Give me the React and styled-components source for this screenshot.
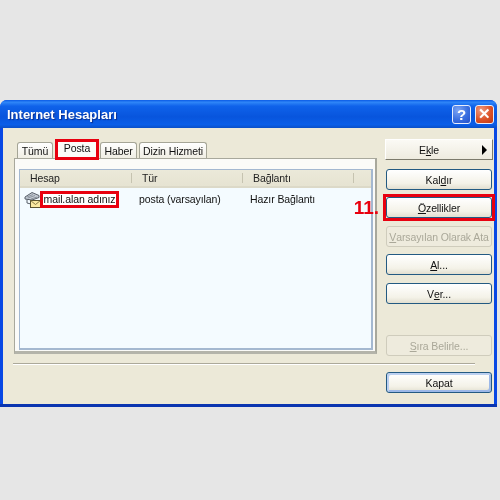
import React from "react";
import styled, { createGlobalStyle } from "styled-components";

const Global = createGlobalStyle`
  html, body { margin: 0; padding: 0; background: #e6e6e6; }
  body { width: 500px; height: 500px; overflow: hidden; font-family: "Liberation Sans", sans-serif; letter-spacing: -0.1px; }
`;

const Page = styled.div`
  width: 500px;
  height: 500px;
  padding-top: 100px;
  box-sizing: border-box;
  background: #e6e6e6;
`;

const Win = styled.div`
  width: 497px;
  height: 307px;
  box-sizing: border-box;
  display: flex;
  flex-direction: column;
  border-radius: 7px 7px 0 0;
  background: #0848e4;
  border-bottom: 3px solid #0a35b0;
  padding: 0 3px 0;
  overflow: hidden;
  filter: blur(0.4px);
`;

const TitleBar = styled.div`
  height: 28px;
  flex: none;
  margin: 0 -3px;
  padding: 0 3px 0 7px;
  display: flex;
  align-items: center;
  justify-content: space-between;
  background: linear-gradient(180deg, #0a5ae6 0%, #2f86f8 8%, #0f62ea 22%, #0855dd 60%, #0a5ee8 88%, #0a4fc8 100%);
`;

const Title = styled.span`
  color: #fff;
  font: bold 13px "Liberation Sans", sans-serif;
  letter-spacing: 0;
  text-shadow: 1px 1px 1px #0a2f90;
`;

const Caption = styled.div`
  display: flex;
  gap: 4px;
`;

const CaptionBtn = styled.div`
  width: 19px;
  height: 19px;
  box-sizing: border-box;
  border: 1px solid #e8eefc;
  border-radius: 3px;
  display: flex;
  align-items: center;
  justify-content: center;
  color: #fff;
  font: bold 15px "Liberation Sans", sans-serif;
  background: ${(p) =>
    p.$close
      ? "radial-gradient(circle at 30% 25%, #ef9a80, #dc5228 55%, #c03a12)"
      : "radial-gradient(circle at 30% 25%, #7ea6f4, #3a6fe0 55%, #2450c8)"};
`;

const Body = styled.div`
  flex: 1;
  background: #ece9d8;
  display: flex;
  flex-direction: column;
  padding: 11px 0 0 11px;
`;

const Upper = styled.div`
  display: flex;
  gap: 9px;
  height: 224px;
`;

const Left = styled.div`
  width: 363px;
  padding-top: 2px;
  display: flex;
  flex-direction: column;
`;

const Tabs = styled.div`
  display: flex;
  height: 17px;
  padding-left: 3px;
  gap: 2px;
  align-items: flex-end;
  position: relative;
  z-index: 1;
`;

const Tab = styled.div`
  height: ${(p) => (p.$active ? 17 : 16)}px;
  width: ${(p) => p.$w}px;
  box-sizing: border-box;
  border: ${(p) => (p.$active ? "none" : "1px solid #a5a596")};
  border-bottom: none;
  border-radius: ${(p) => (p.$active ? "0" : "3px 3px 0 0")};
  background: ${(p) => (p.$active ? "#fbfbf8" : "linear-gradient(180deg,#fff,#f0eee4)")};
  display: flex;
  align-items: center;
  justify-content: center;
  padding-bottom: ${(p) => (p.$active ? 3 : 0)}px;
  font-size: 10.5px;
  color: #111;
  white-space: nowrap;
  outline: ${(p) => (p.$active ? "3px solid #e8000f" : "none")};
  outline-offset: -1px;
  margin: ${(p) => (p.$active ? "0 1px 0 2px" : "0")};
  position: relative;
  z-index: ${(p) => (p.$active ? 2 : 0)};
`;

const Panel = styled.div`
  height: 196px;
  box-sizing: border-box;
  border: 1px solid #a8a89c;
  border-right: 2px solid #a8a89c;
  border-bottom: 3px solid #b4b4aa;
  background: #fbfbf8;
  padding: 10px 2px 0 4px;
`;

const List = styled.div`
  height: 181px;
  box-sizing: border-box;
  border: 1px solid #a4b8d0;
  border-right-width: 2px;
  border-bottom-width: 2px;
  background: #f4fbff;
  display: flex;
  flex-direction: column;
`;

const Head = styled.div`
  height: 18px;
  box-sizing: border-box;
  flex: none;
  display: grid;
  grid-template-columns: 112px 111px 111px 1fr;
  background: linear-gradient(180deg, #ebe9d9, #e6e3d2);
  border-bottom: 2px solid #dcd9c8;
  font-size: 10.5px;
  color: #222;
`;

const HeadCell = styled.div`
  display: flex;
  align-items: center;
  padding-left: 10px;
  position: relative;
  &::after {
    content: "";
    position: absolute;
    right: 0;
    top: 3px;
    bottom: 3px;
    width: 1px;
    background: #c6c3b0;
  }
`;

const Row = styled.div`
  display: grid;
  grid-template-columns: 112px 111px 1fr;
  height: 18px;
  margin-top: 2px;
  align-items: center;
  font-size: 10.5px;
  color: #111;
`;

const NameCell = styled.div`
  display: flex;
  align-items: center;
  padding-left: 4px;
`;

const Name = styled.span`
  margin-left: 1px;
  height: 13px;
  line-height: 13px;
  width: 75px;
  white-space: nowrap;
  background: #fff;
  outline: 3px solid #e8000f;
  outline-offset: -1px;
  text-align: center;
`;

const Cell = styled.div`
  padding-left: 7px;
  white-space: nowrap;
`;

const Right = styled.div`
  width: 106px;
  display: flex;
  flex-direction: column;
`;

const Btn = styled.div`
  width: ${(p) => (p.$menu ? 108 : 106)}px;
  height: 21px;
  margin-left: ${(p) => (p.$menu ? -1 : 0)}px;
  margin-top: ${(p) => p.$top || 0}px;
  padding-right: ${(p) => (p.$menu ? 20 : 0)}px;
  box-sizing: border-box;
  flex: none;
  display: flex;
  align-items: center;
  justify-content: center;
  position: relative;
  font-size: 10.5px;
  white-space: nowrap;
  border-radius: ${(p) => (p.$menu ? 0 : 3)}px;
  color: ${(p) => (p.$off ? "#aaa899" : "#111")};
  background: ${(p) =>
    p.$off
      ? "#eeebdd"
      : p.$menu
        ? "linear-gradient(180deg,#fbfaf5,#eeebdf)"
        : "linear-gradient(180deg,#ffffff,#f4f2e8 70%,#e2dfd0)"};
  border: 1px solid ${(p) => (p.$off ? "#cfccbc" : "#235a82")};
  ${(p) => p.$menu && "border-color:#fff #7c7a6c #7c7a6c #fff;"}
  ${(p) => p.$def && "box-shadow: inset 2px 2px 0 #bcd0f0, inset -2px -2px 0 #9cb8e8;"}
  u { text-underline-offset: 1px; }
`;

const Arrow = styled.span`
  position: absolute;
  right: 5px;
  top: 5px;
  width: 0;
  height: 0;
  border-left: 5px solid #000;
  border-top: 5px solid transparent;
  border-bottom: 5px solid transparent;
`;

const Marked = styled.div`
  position: relative;
  margin-top: 7px;
  outline: 3px solid #e8000f;
  width: 106px;
`;

const StepLabel = styled.span`
  position: absolute;
  right: 113px;
  top: 0;
  font: bold 19px "Liberation Sans", sans-serif;
  letter-spacing: 0;
  color: #e8000f;
  white-space: nowrap;
`;

const Rule = styled.div`
  width: 462px;
  margin-left: -1px;
  height: 1px;
  background: #aca99a;
  box-shadow: 0 1px 0 #fff;
`;

const Footer = styled.div`
  display: flex;
  padding: 8px 0 0 372px;
`;

const AccountIcon = () => (
  <svg width="17" height="17" viewBox="0 0 17 17">
    <path d="M1 6 L8 1.5 L15 4.5 L15 6.5 L8 9 L1 8 Z" fill="#c4cbd4" stroke="#59606a" strokeWidth="1" />
    <path d="M3 6 L9 3.5 M4 7 L11 4.5 M7 8 L13 6" stroke="#7d858f" strokeWidth="0.8" />
    <path d="M3 8.5 V12 L7 13" fill="none" stroke="#59606a" strokeWidth="1" />
    <rect x="6.5" y="9.5" width="10" height="7" fill="#fbe9a2" stroke="#5b5330" strokeWidth="1" />
    <path d="M6.5 9.5 L11.5 13.5 L16.5 9.5" fill="none" stroke="#7d7040" strokeWidth="0.9" />
  </svg>
);

export default function App() {
  return (
    <Page>
      <Global />
      <Win>
        <TitleBar>
          <Title>Internet Hesapları</Title>
          <Caption>
            <CaptionBtn>?</CaptionBtn>
            <CaptionBtn $close>✕</CaptionBtn>
          </Caption>
        </TitleBar>
        <Body>
          <Upper>
            <Left>
              <Tabs>
                <Tab $w={36}>Tümü</Tab>
                <Tab $active $w={40}>Posta</Tab>
                <Tab $w={37}>Haber</Tab>
                <Tab $w={68}>Dizin Hizmeti</Tab>
              </Tabs>
              <Panel>
                <List>
                  <Head>
                    <HeadCell>Hesap</HeadCell>
                    <HeadCell>Tür</HeadCell>
                    <HeadCell>Bağlantı</HeadCell>
                  </Head>
                  <Row>
                    <NameCell>
                      <AccountIcon />
                      <Name>mail.alan adınız</Name>
                    </NameCell>
                    <Cell>posta (varsayılan)</Cell>
                    <Cell>Hazır Bağlantı</Cell>
                  </Row>
                </List>
              </Panel>
            </Left>
            <Right>
              <Btn $menu>E<u>k</u>le<Arrow /></Btn>
              <Btn $top={9}>Kal<u>d</u>ır</Btn>
              <Marked>
                <StepLabel>11.</StepLabel>
                <Btn><u>Ö</u>zellikler</Btn>
              </Marked>
              <Btn $off $top={8}><u>V</u>arsayılan Olarak Ata</Btn>
              <Btn $top={7}><u>A</u>l...</Btn>
              <Btn $top={8}>V<u>e</u>r...</Btn>
              <Btn $off $top={31}><u>S</u>ıra Belirle...</Btn>
            </Right>
          </Upper>
          <Rule />
          <Footer>
            <Btn $def>Kapat</Btn>
          </Footer>
        </Body>
      </Win>
    </Page>
  );
}
